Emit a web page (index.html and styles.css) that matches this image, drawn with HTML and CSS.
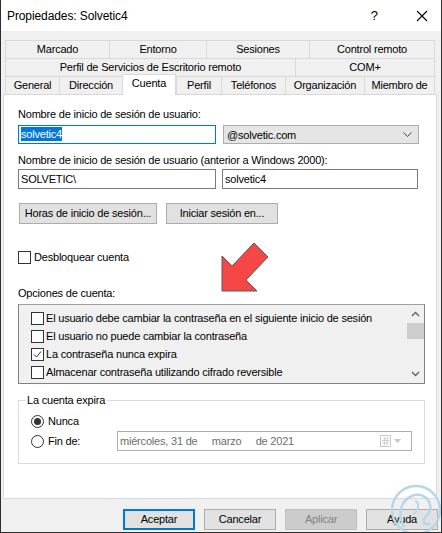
FILE: index.html
```html
<!DOCTYPE html>
<html lang="es">
<head>
  <meta charset="UTF-8" />
  <title>Propiedades: Solvetic4</title>
  <link rel="stylesheet" href="styles.css">
</head>
<body>
  <div class="window">
    <div class="titlebar">
      <span class="title">Propiedades: Solvetic4</span>
      <span class="help">?</span>
      <svg class="close" width="12" height="12" viewBox="0 0 12 12"><path d="M1 1L11 11M11 1L1 11" stroke="#000" stroke-width="1.1" fill="none"/></svg>
    </div>

    <div class="tabs">
      <div class="tab-row row1">
        <div class="tab">Marcado</div>
        <div class="tab">Entorno</div>
        <div class="tab">Sesiones</div>
        <div class="tab">Control remoto</div>
      </div>
      <div class="tab-row row2">
        <div class="tab">Perfil de Servicios de Escritorio remoto</div>
        <div class="tab">COM+</div>
      </div>
      <div class="tab-row row3">
        <div class="tab">General</div>
        <div class="tab">Dirección</div>
        <div class="tab active">Cuenta</div>
        <div class="tab">Perfil</div>
        <div class="tab">Teléfonos</div>
        <div class="tab">Organización</div>
        <div class="tab">Miembro de</div>
      </div>
    </div>

    <div class="panel">
      <div class="label first">Nombre de inicio de sesión de usuario:</div>
      <div class="field-row">
        <div class="textbox focused"><span class="sel">solvetic4</span></div>
        <div class="combo">
          <span>@solvetic.com</span>
          <svg width="9" height="5" viewBox="0 0 9 5"><path d="M0.5 0.5L4.5 4.5L8.5 0.5" stroke="#444" fill="none"/></svg>
        </div>
      </div>

      <div class="label second">Nombre de inicio de sesión de usuario (anterior a Windows 2000):</div>
      <div class="field-row tight">
        <div class="textbox">SOLVETIC\</div>
        <div class="textbox right">solvetic4</div>
      </div>

      <div class="btn-row">
        <div class="btn hours">Horas de inicio de sesión...</div>
        <div class="btn logon">Iniciar sesión en...</div>
      </div>

      <div class="check-line unlock">
        <span class="check"></span>
        <span>Desbloquear cuenta</span>
      </div>

      <div class="label options">Opciones de cuenta:</div>
      <div class="listbox">
        <div class="list-items">
          <div class="check-line item"><span class="check"></span><span>El usuario debe cambiar la contraseña en el siguiente inicio de sesión</span></div>
          <div class="check-line item"><span class="check"></span><span>El usuario no puede cambiar la contraseña</span></div>
          <div class="check-line item"><span class="check checked"><svg width="11" height="11" viewBox="0 0 11 11"><path d="M2 5.5L4.5 8L9 2.5" stroke="#333" stroke-width="1" fill="none"/></svg></span><span>La contraseña nunca expira</span></div>
          <div class="check-line item"><span class="check"></span><span>Almacenar contraseña utilizando cifrado reversible</span></div>
        </div>
        <div class="scrollbar">
          <svg class="sb-arrow" width="9" height="6" viewBox="0 0 9 6"><path d="M1 5L4.5 1.5L8 5" stroke="#606060" stroke-width="1.4" fill="none"/></svg>
          <div class="thumb"></div>
          <div class="sb-space"></div>
          <svg class="sb-arrow" width="9" height="6" viewBox="0 0 9 6"><path d="M1 1L4.5 4.5L8 1" stroke="#606060" stroke-width="1.4" fill="none"/></svg>
        </div>
      </div>

      <fieldset class="expires">
        <legend>La cuenta expira</legend>
        <div class="radio-line never">
          <span class="radio on"></span>
          <span>Nunca</span>
        </div>
        <div class="radio-line end">
          <div class="radio-opt">
            <span class="radio"></span>
            <span>Fin de:</span>
          </div>
          <div class="datepicker">
            <span class="date-text">miércoles, 31 de&nbsp;&nbsp;&nbsp;&nbsp;&nbsp;marzo&nbsp;&nbsp;&nbsp;&nbsp;&nbsp;de 2021</span>
            <svg width="22" height="12" viewBox="0 0 22 12">
              <rect x="0.5" y="0.5" width="10" height="11" fill="#fff" stroke="#c8c8c8"/>
              <path d="M3 3H9M2 5.5H9M2 8H9M4.5 3V10M7 3V10" stroke="#d0d0d0" fill="none"/>
              <path d="M14 4H21L17.5 8Z" fill="#c8c8c8"/>
            </svg>
          </div>
        </div>
      </fieldset>

      <svg class="arrow" width="60" height="60" viewBox="0 0 60 60">
        <polygon points="5,53 5,18 15,28 37,5 51,19 29,42 40,53" fill="#f64747" stroke="#5a5a5a" stroke-width="1" stroke-linejoin="round"/>
      </svg>
    </div>

    <div class="footer">
      <div class="btn default">Aceptar</div>
      <div class="btn">Cancelar</div>
      <div class="btn disabled">Aplicar</div>
      <div class="btn">Ayuda</div>
    </div>

    <svg class="logo" width="56" height="52" viewBox="0 0 56 52">
      <circle cx="28" cy="26" r="24" fill="none" stroke="#b3d8ec" stroke-width="2.5"/>
      <path d="M16 42C10 33 11 17 24 12C35 8 44 16 42 26C41 31 37 32 36 36C35 39 38 41 41 40" fill="none" stroke="#b3d8ec" stroke-width="2.5" stroke-linecap="round"/>
      <path d="M26 30C30 26 32 20 28 17" fill="none" stroke="#b3d8ec" stroke-width="2" stroke-linecap="round"/>
    </svg>
  </div>
</body>
</html>
```

FILE: styles.css
```css
body {
  margin: 0;
  font-family: "Liberation Sans", Arial, sans-serif;
  font-size: 11px;
  letter-spacing: -0.2px;
  color: #000;
  background: #f0f0f0;
}
.window {
  position: relative;
  width: 442px;
  height: 533px;
  box-sizing: border-box;
  border: 1px solid #2e2e2e;
  border-top: none;
  background: #f0f0f0;
  overflow: hidden;
}

/* title bar */
.titlebar {
  height: 31px;
  background: #fff;
  display: flex;
  align-items: center;
  padding-left: 6px;
  font-size: 12px;
  letter-spacing: -0.1px;
}
.titlebar .title {
  flex: 1;
}
.titlebar .help {
  font-size: 13px;
  margin-right: 38px;
}
.titlebar .close {
  margin-right: 13px;
}

/* tabs */
.tabs {
  margin: 9px 0 0 4px;
  width: 430px;
}
.tab-row {
  display: grid;
  height: 18px;
}
.row1 { grid-template-columns: 104px 97px 103px 126px; }
.row2 { grid-template-columns: 290px 140px; }
.row3 { grid-template-columns: 54px 63px 54px 45px 64px 79px 71px; }
.tab {
  height: 18px;
  box-sizing: border-box;
  border-top: 1px solid #d9d9d9;
  border-left: 1px solid #d9d9d9;
  text-align: center;
  line-height: 17px;
  white-space: nowrap;
  background: #f0f0f0;
}
.tab:last-child {
  border-right: 1px solid #d9d9d9;
}
.tab.active {
  position: relative;
  z-index: 1;
  margin-top: -2px;
  height: 21px;
  background: #fff;
  border-right: 1px solid #d9d9d9;
  line-height: 17px;
}

/* panel */
.panel {
  position: relative;
  margin-left: 2px;
  width: 434px;
  height: 405px;
  box-sizing: border-box;
  border: 1px solid #d9d9d9;
  background: #fff;
  padding-left: 14px;
}
.label {
  line-height: 16px;
  height: 16px;
}
.label.first { padding-top: 11px; }
.label.second { margin-top: 7px; }
.label.options { margin-top: 20px; }

.field-row {
  display: flex;
  gap: 6px;
  margin-top: 3px;
  height: 20px;
}
.field-row.tight { margin-top: 1px; }
.textbox {
  width: 198px;
  height: 20px;
  box-sizing: border-box;
  border: 1px solid #7a7a7a;
  background: #fff;
  padding-left: 2px;
  line-height: 18px;
}
.textbox.focused {
  border-color: #0078d7;
  height: 19px;
  line-height: 17px;
}
.textbox.right {
  width: 196px;
}
.sel {
  background: #0078d7;
  color: #fff;
  padding: 1px 0;
}
.combo {
  margin-left: 1px;
  width: 196px;
  height: 19px;
  box-sizing: border-box;
  border: 1px solid #adadad;
  background: #e5e5e5;
  display: flex;
  align-items: center;
  justify-content: space-between;
  padding: 0 6px 0 3px;
}

.btn-row {
  display: flex;
  gap: 9px;
  margin-top: 14px;
  padding-left: 1px;
}
.btn {
  height: 21px;
  box-sizing: border-box;
  border: 1px solid #adadad;
  background: #e1e1e1;
  text-align: center;
  line-height: 19px;
}
.btn.hours { width: 138px; }
.btn.logon { width: 112px; }

.check-line {
  display: flex;
  align-items: center;
  gap: 3px;
  height: 16px;
}
.check-line.unlock { margin-top: 25px; }
.check {
  width: 13px;
  height: 13px;
  box-sizing: border-box;
  border: 1px solid #333;
  background: #fff;
  display: flex;
  align-items: center;
  justify-content: center;
}

.listbox {
  margin-top: 3px;
  width: 407px;
  height: 80px;
  box-sizing: border-box;
  border: 1px solid #828282;
  border-top-color: #a0a0a0;
  background: #f0f0f0;
  display: flex;
}
.list-items {
  flex: 1;
  padding: 4px 0 0 12px;
}
.check-line.item {
  height: 18px;
  gap: 2px;
}
.scrollbar {
  width: 17px;
  display: flex;
  flex-direction: column;
  align-items: center;
}
.sb-arrow {
  margin: 6px 0;
}
.thumb {
  width: 17px;
  height: 16px;
  background: #cdcdcd;
}
.sb-space { flex: 1; }

/* group box */
.expires {
  margin: 8px 0 0;
  padding: 0 0 12px;
  width: 407px;
  box-sizing: border-box;
  border: 1px solid #dcdcdc;
}
.expires legend {
  margin-left: 6px;
  padding: 0 2px;
  line-height: 16px;
}
.radio-line {
  display: flex;
  align-items: center;
  padding-left: 12px;
}
.radio-line.never {
  margin-top: 5px;
  height: 16px;
  gap: 4px;
}
.radio-line.end {
  margin-top: 2px;
  height: 20px;
}
.radio-opt {
  width: 86px;
  display: flex;
  align-items: center;
  gap: 4px;
}
.radio {
  width: 13px;
  height: 13px;
  box-sizing: border-box;
  border: 1px solid #333;
  border-radius: 50%;
  background: #fff;
  display: flex;
  align-items: center;
  justify-content: center;
}
.radio.on::after {
  content: "";
  width: 7px;
  height: 7px;
  border-radius: 50%;
  background: #333;
}
.datepicker {
  width: 295px;
  height: 20px;
  box-sizing: border-box;
  border: 1px solid #adadad;
  background: #fff;
  color: #6d6d6d;
  display: flex;
  align-items: center;
  justify-content: space-between;
  padding: 0 9px 0 2px;
  white-space: nowrap;
}

/* annotation overlays */
.arrow {
  position: absolute;
  left: 213px;
  top: 143px;
}
.logo {
  position: absolute;
  left: 387px;
  top: 484px;
}

/* dialog buttons */
.footer {
  display: flex;
  justify-content: flex-end;
  gap: 9px;
  margin-top: 10px;
  padding-right: 3px;
}
.footer .btn {
  width: 72px;
}
.btn.default {
  border: 2px solid #0078d7;
  line-height: 17px;
}
.btn.disabled {
  background: #cccccc;
  border-color: #bfbfbf;
  color: #838383;
}
```
